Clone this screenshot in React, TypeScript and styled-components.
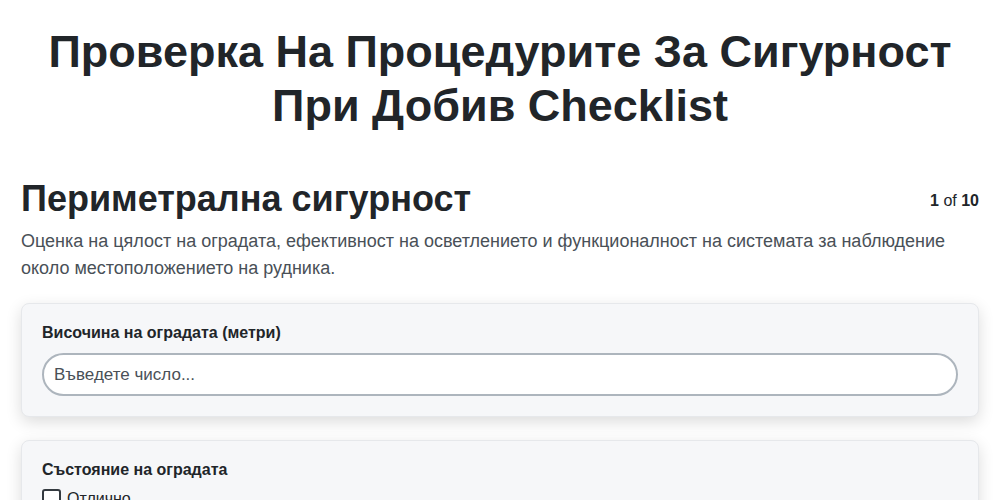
import React from 'react';
import styled, { createGlobalStyle } from 'styled-components';

const GlobalStyle = createGlobalStyle`
  body {
    margin: 0;
    background: #ffffff;
    font-family: "Liberation Sans", Arial, sans-serif;
    color: #212529;
  }
`;

const Page = styled.div`
  padding: 0 21px 40px 21px;
`;

const Title = styled.h1`
  margin: 0;
  padding-top: 25px;
  font-size: 45px;
  line-height: 1.2;
  font-weight: 700;
  text-align: center;
  color: #212529;
`;

const SectionHead = styled.div`
  display: flex;
  align-items: flex-start;
  justify-content: space-between;
  margin-top: 44px;
`;

const SectionTitle = styled.h2`
  margin: 0;
  font-size: 36px;
  line-height: 1.2;
  font-weight: 700;
  color: #212529;
`;

const Counter = styled.div`
  font-size: 16px;
  color: #212529;
  padding-top: 15px;

  strong {
    font-weight: 700;
  }
`;

const Description = styled.p`
  margin: 8px 0 21px 0;
  font-size: 18px;
  line-height: 1.5;
  color: #495057;
`;

const Card = styled.div`
  background: #f6f7f9;
  border: 1px solid #e6e8eb;
  border-radius: 8px;
  box-shadow: 0 5px 16px rgba(0, 0, 0, 0.14);
  padding: 20px;
  margin-bottom: 23px;
`;

const Label = styled.label`
  display: block;
  font-size: 16px;
  font-weight: 700;
  color: #212529;
  margin-bottom: 11px;
`;

const NumberInput = styled.input`
  box-sizing: border-box;
  width: 100%;
  height: 43px;
  border: 2px solid #adb5bd;
  border-radius: 22px;
  background: #ffffff;
  padding: 0 10px;
  font-family: inherit;
  font-size: 17px;
  color: #212529;
  outline: none;

  &::placeholder {
    color: #495057;
  }
`;

const Option = styled.label`
  display: flex;
  align-items: center;
  gap: 6px;
  font-size: 16px;
  color: #212529;
  margin-top: -1px;
`;

const Box = styled.span`
  width: 15px;
  height: 15px;
  border: 2px solid #343a40;
  border-radius: 3px;
  background: #ffffff;
`;

export default function App() {
  return (
    <>
      <GlobalStyle />
      <Page>
        <Title>
          Проверка На Процедурите За Сигурност
          <br />
          При Добив Checklist
        </Title>
        <SectionHead>
          <SectionTitle>Периметрална сигурност</SectionTitle>
          <Counter>
            <strong>1</strong> of <strong>10</strong>
          </Counter>
        </SectionHead>
        <Description>
          Оценка на цялост на оградата, ефективност на осветлението и функционалност на системата за наблюдение
          около местоположението на рудника.
        </Description>
        <Card>
          <Label>Височина на оградата (метри)</Label>
          <NumberInput type="number" placeholder="Въведете число..." />
        </Card>
        <Card>
          <Label>Състояние на оградата</Label>
          <Option>
            <Box />
            Отлично
          </Option>
        </Card>
      </Page>
    </>
  );
}
